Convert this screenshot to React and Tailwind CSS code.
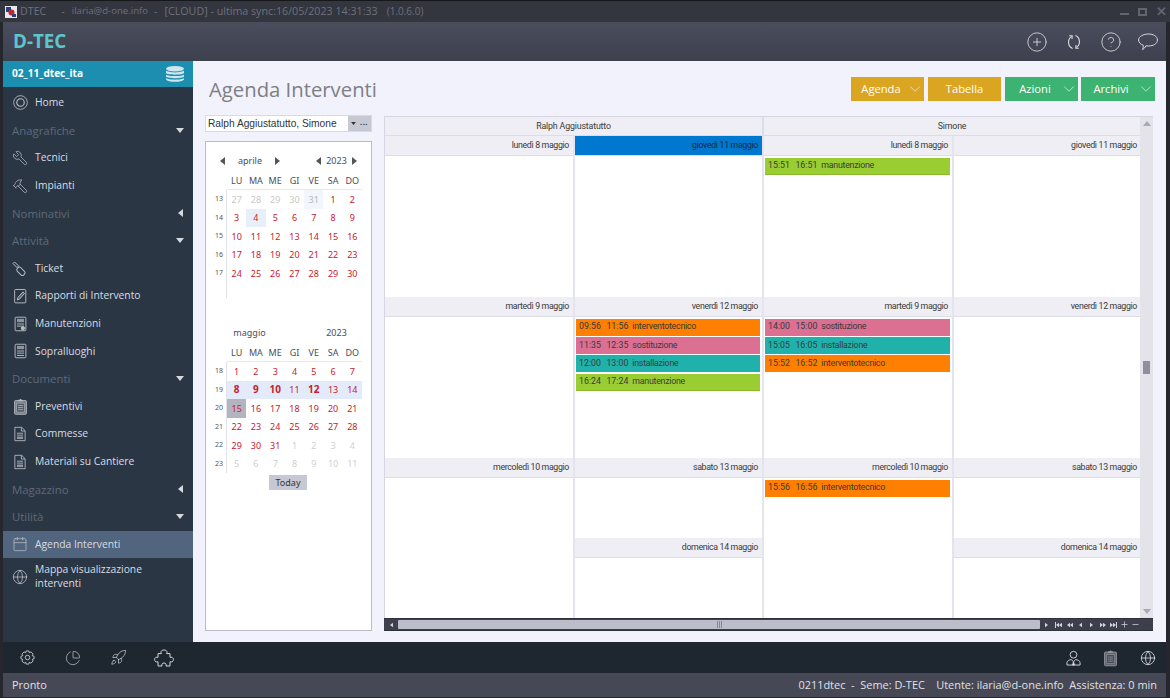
import { Wrench, Hammer, Globe, ChartPie, Rocket, CirclePlus, CircleHelp, Calendar, ChevronDown, Minus, Plus } from "lucide-react";

const ui = "font-['Open_Sans',sans-serif]";
const cal = "font-['Noto_Sans',sans-serif]";
const small = "font-['Roboto',sans-serif]";

const Arrow = ({ dir = "down", className = "" }) => {
  const pts = { down: "0,0 8,0 4,5", left: "5,0 5,8 0,4", right: "0,0 0,8 5,4", up: "0,5 8,5 4,0" };
  const box = dir === "down" || dir === "up" ? "0 0 8 5" : "0 0 5 8";
  const size = dir === "down" || dir === "up" ? { width: 8, height: 5 } : { width: 5, height: 8 };
  return (
    <svg viewBox={box} {...size} className={className}>
      <polygon points={pts[dir]} fill="currentColor" />
    </svg>
  );
};

const HomeIcon = () => (
  <svg viewBox="0 0 16 16" className="w-[15px] h-[15px]" fill="none" stroke="currentColor" strokeWidth="0.9">
    <circle cx="8" cy="8" r="7.3" />
    <circle cx="8" cy="8" r="4" strokeWidth="1.2" />
  </svg>
);

const TicketIcon = () => (
  <svg viewBox="0 0 16 16" className="w-4 h-4" fill="none" stroke="currentColor" strokeWidth="1">
    <path d="M1 2.6 L2.6 1 L6.6 5 L5 6.6 Z" />
    <rect x="6.6" y="5.8" width="5" height="9" rx="2" transform="rotate(-45 9 10.5)" />
  </svg>
);

const ReportIcon = () => (
  <svg viewBox="0 0 14 16" className="w-[13px] h-4" fill="none" stroke="currentColor" strokeWidth="1">
    <rect x="0.7" y="1" width="12" height="14.4" rx="1" />
    <path d="M3.5 12.3 L4.2 9.6 L9.6 3.6 L11.3 5.2 L5.9 11.4 Z" fill="currentColor" fillOpacity="0.35" />
  </svg>
);

const SheetIcon = ({ gear }) => (
  <svg viewBox="0 0 14 16" className="w-[13px] h-4" fill="none" stroke="currentColor" strokeWidth="1">
    <rect x="1.2" y="0.7" width="11.6" height="14.6" rx="1" />
    <rect x="3.2" y="2.5" width="7.6" height="3.5" fill="currentColor" stroke="none" opacity="0.7" />
    <path d="M3.2 8 H10.8 M3.2 10.3 H10.8" />
    {gear ? <circle cx="9.6" cy="12.6" r="1.8" fill="currentColor" /> : <path d="M3.2 12.8 H10.8" />}
  </svg>
);

const ClipIcon = ({ className = "w-[13px] h-[17px]" }) => (
  <svg viewBox="0 0 14 18" className={className}>
    <rect x="0.6" y="2.6" width="12.8" height="14.8" rx="1" fill="currentColor" fillOpacity="0.55" stroke="currentColor" strokeWidth="0.9" />
    <path d="M4.6 3.4 V1.8 H6 A1 1 0 0 1 8 1.8 H9.4 V3.4 Z" fill="currentColor" />
    <rect x="3" y="5.4" width="8" height="9.6" fill="#2b3644" fillOpacity="0.55" stroke="currentColor" strokeWidth="0.6" />
    <path d="M4.4 8 H9.6 M4.4 10.2 H9.6 M4.4 12.4 H9.6" stroke="currentColor" strokeWidth="0.8" />
  </svg>
);

const DocIcon = () => (
  <svg viewBox="0 0 14 17" className="w-[12px] h-[16px]" fill="none" stroke="currentColor" strokeWidth="1">
    <path d="M1 0.7 H9 L13 4.7 V16.3 H1 Z" />
    <path d="M8.6 0.9 V5 H12.8" />
    <path d="M3.4 7.6 H10.6 M3.4 9.8 H10.6" />
    <rect x="3.4" y="11.4" width="7.2" height="3" fill="currentColor" fillOpacity="0.7" stroke="none" />
  </svg>
);

const DbIcon = () => (
  <svg viewBox="0 0 20 16" className="w-5 h-4 text-[#cfe6ee]" fill="currentColor">
    <ellipse cx="10" cy="2.8" rx="9" ry="2.8" />
    <path d="M1 4.6 C3 7 17 7 19 4.6 V7 C17 9.2 3 9.2 1 7 Z" />
    <path d="M1 8.4 C3 10.6 17 10.6 19 8.4 V10.6 C17 12.8 3 12.8 1 10.6 Z" />
    <path d="M1 12 C3 14.2 17 14.2 19 12 V13.4 C17 16.6 3 16.6 1 13.4 Z" />
  </svg>
);

const SyncIcon = () => (
  <svg viewBox="0 0 14 18" className="w-[14px] h-[18px]" fill="none" stroke="currentColor" strokeWidth="1.1">
    <path d="M5.6 15.4 C0.8 13.4 0 6.6 4.6 3.4" />
    <path d="M2.2 2.8 L5.2 2.8 L5 6" />
    <path d="M8.4 2.6 C13.2 4.6 14 11.4 9.4 14.6" />
    <path d="M11.8 15.2 L8.8 15.2 L9 12" />
  </svg>
);

const ChatIcon = () => (
  <svg viewBox="0 0 20 18" className="w-5 h-[18px]" fill="none" stroke="currentColor" strokeWidth="1">
    <path d="M10.5 1 C15.5 1 19.4 3.4 19.4 7 C19.4 10.6 15.5 13 10.5 13 C9.6 13 8.7 12.9 7.9 12.8 C7.2 14.4 6 15.8 4.6 16.6 C5.2 15.2 5.4 13.6 5.2 12.2 C2.4 11.2 0.6 9.4 0.6 7 C0.6 3.4 5.5 1 10.5 1 Z" />
  </svg>
);

const GearIcon = () => (
  <svg viewBox="0 0 16 16" className="w-[15px] h-[15px]" fill="none" stroke="currentColor" strokeWidth="0.9">
    <path d="M6.6 1 H9.4 L9.9 2.9 L11.7 2 L14 4.3 L13 6 L15 6.7 V9.3 L13 10 L14 11.7 L11.7 14 L9.9 13.1 L9.4 15 H6.6 L6.1 13.1 L4.3 14 L2 11.7 L3 10 L1 9.3 V6.7 L3 6 L2 4.3 L4.3 2 L6.1 2.9 Z" />
    <circle cx="8" cy="8" r="2.4" />
  </svg>
);

const PuzzleIcon = () => (
  <svg viewBox="0 0 20 18" className="w-5 h-[18px]" fill="none" stroke="currentColor" strokeWidth="1">
    <path d="M7.4 4.6 C6.4 3.2 7 1 10 1 C13 1 13.6 3.2 12.6 4.6 H16 V8.4 C17.6 7.8 19.4 8.6 19.4 10.6 C19.4 12.6 17.6 13.4 16 12.8 V17 H12 C12.6 15.4 11.8 14 10 14 C8.2 14 7.4 15.4 8 17 H4 V12.8 C2.4 13.4 0.6 12.6 0.6 10.6 C0.6 8.6 2.4 7.8 4 8.4 V4.6 Z" />
  </svg>
);

const PersonIcon = () => (
  <svg viewBox="0 0 16 17" className="w-[15px] h-4" fill="none" stroke="currentColor" strokeWidth="1">
    <circle cx="8" cy="5" r="3.6" />
    <path d="M1 16 V13.6 C1 11.6 3.4 10.4 5.6 10.2 L8 12.4 L10.4 10.2 C12.6 10.4 15 11.6 15 13.6 V16 Z" />
    <path d="M8 12.4 L7 16 H9 Z" fill="currentColor" />
  </svg>
);

const Logo = () => (
  <svg viewBox="0 0 12 12" className="w-3 h-3 mr-[3px]">
    <rect width="12" height="12" fill="#e8e8ec" />
    <rect x="1" y="1" width="5" height="5" fill="#2a3f7e" />
    <circle cx="6.5" cy="6.5" r="3" fill="#c8242b" />
    <rect x="7" y="8" width="4" height="3" fill="#2a3f7e" />
  </svg>
);

const menu = [
  { label: "Home", icon: <HomeIcon /> },
  { group: "Anagrafiche", dir: "down" },
  { label: "Tecnici", icon: <Wrench size={16} strokeWidth={1.1} className="-scale-x-100" /> },
  { label: "Impianti", icon: <Hammer size={16} strokeWidth={1.1} className="-scale-x-100" /> },
  { group: "Nominativi", dir: "left" },
  { group: "Attività", dir: "down" },
  { label: "Ticket", icon: <TicketIcon /> },
  { label: "Rapporti di Intervento", icon: <ReportIcon /> },
  { label: "Manutenzioni", icon: <SheetIcon gear /> },
  { label: "Sopralluoghi", icon: <SheetIcon /> },
  { group: "Documenti", dir: "down" },
  { label: "Preventivi", icon: <ClipIcon /> },
  { label: "Commesse", icon: <DocIcon /> },
  { label: "Materiali su Cantiere", icon: <DocIcon /> },
  { group: "Magazzino", dir: "left" },
  { group: "Utilità", dir: "down" },
  { label: "Agenda Interventi", icon: <Calendar size={16} strokeWidth={1.1} />, active: true },
];

const Sidebar = () => (
  <aside className={`w-[190px] shrink-0 flex flex-col bg-[#2b3644] ${ui}`}>
    <div className="h-[26px] flex items-center justify-between pl-[9px] pr-2 bg-[#1c8fb0] text-white text-[10.1px] font-bold">
      02_11_dtec_ita
      <DbIcon />
    </div>
    <div className="h-[2.2px]" />
    {menu.map((m) =>
      m.group ? (
        <div key={m.group} className="h-[27.6px] flex items-center justify-between pl-[9px] pr-[9px] text-[11.4px] text-[#5d6a7b]">
          {m.group}
          <span className="w-2 flex justify-center text-[#d5d8dd]">
            <Arrow dir={m.dir} />
          </span>
        </div>
      ) : (
        <div
          key={m.label}
          className={`h-[27.6px] flex items-center text-[10.3px] text-[#d8dde3] ${m.active ? "bg-[#51657e]" : ""}`}
        >
          <span className="w-8 flex justify-center text-[#b9bec5] pl-[4px] pr-[2px]">{m.icon}</span>
          {m.label}
        </div>
      )
    )}
    <div className="flex items-center text-[10.3px] text-[#d8dde3] pt-[5px]">
      <span className="w-8 flex justify-center text-[#c3c8ce] pl-[4px] pr-[2px]">
        <Globe size={16} strokeWidth={1.1} />
      </span>
      <span className="leading-[13.5px]">
        Mappa visualizzazione
        <br />
        interventi
      </span>
    </div>
  </aside>
);

const DAY_HEADS = ["LU", "MA", "ME", "GI", "VE", "SA", "DO"];

const april = {
  weeks: [13, 14, 15, 16, 17],
  days: [
    ["27", "28", "29", "30", "31", "1", "2"],
    ["3", "4", "5", "6", "7", "8", "9"],
    ["10", "11", "12", "13", "14", "15", "16"],
    ["17", "18", "19", "20", "21", "22", "23"],
    ["24", "25", "26", "27", "28", "29", "30"],
  ],
};

const may = {
  weeks: [18, 19, 20, 21, 22, 23],
  days: [
    ["1", "2", "3", "4", "5", "6", "7"],
    ["8", "9", "10", "11", "12", "13", "14"],
    ["15", "16", "17", "18", "19", "20", "21"],
    ["22", "23", "24", "25", "26", "27", "28"],
    ["29", "30", "31", "1", "2", "3", "4"],
    ["5", "6", "7", "8", "9", "10", "11"],
  ],
};

const Month = ({ name, data, nav, style }) => (
  <div className={`h-[172px] ${cal} text-[9px]`}>
    <div className="h-[20px] flex items-center text-[#4a4d58] pl-[13px]">
      <div className="w-[60px] flex items-center justify-between">
        {nav ? <Arrow dir="left" className="text-[#555]" /> : <span />}
        <span className={nav ? "" : "mr-[1px]"}>{name}</span>
        {nav ? <Arrow dir="right" className="text-[#555]" /> : <span />}
      </div>
      <div className="w-[41px] ml-[36px] flex items-center justify-between">
        {nav ? <Arrow dir="left" className="text-[#555]" /> : <span />}
        <span>2023</span>
        {nav ? <Arrow dir="right" className="text-[#555]" /> : <span />}
      </div>
    </div>
    <div className="mt-[2px] ml-[20px] w-[135px] h-[17px] flex items-center border-b border-[#e6e6ee] text-[#4a4d58]">
      {DAY_HEADS.map((d) => (
        <span key={d} className="w-[19.3px] text-center">{d}</span>
      ))}
    </div>
    <div className="flex">
      <div className="w-[20px] border-r border-[#e2e2ea] min-h-[108px] text-[7px] text-[#555] text-right pr-[3px]">
        {data.weeks.map((w) => (
          <div key={w} className="h-[18.5px] flex items-center justify-end">{w}</div>
        ))}
      </div>
      <div className="w-[135px]">
        {data.days.map((row, r) => (
          <div key={r} className={`flex h-[18.5px] items-center ${style(r, 0).row || ""}`}>
            {row.map((d, c) => {
              const s = style(r, c);
              return (
                <span key={c} className={`w-[19.3px] h-[18.5px] flex items-center justify-center ${s.cell}`}>
                  {d}
                </span>
              );
            })}
          </div>
        ))}
      </div>
    </div>
  </div>
);

const aprilStyle = (r, c) => {
  if (r === 0 && c === 4) return { cell: "text-[#b5b5b5] bg-[#f3f5fc]" };
  if (r === 0 && c < 5) return { cell: "text-[#c8c8c8]" };
  if (r === 1 && c === 1) return { cell: "text-[#c8202e] bg-[#e8effa]" };
  return { cell: "text-[#c8202e]" };
};

const mayStyle = (r, c) => {
  if (r === 1) {
    const bold = c < 3 || c === 4;
    return { row: "bg-[#e3ebfa]", cell: `text-[#c8202e] ${bold ? "font-bold text-[10px]" : ""}` };
  }
  if (r === 2 && c === 0) return { cell: "text-[#c8202e] bg-[#b2b5c0]" };
  if (r === 5 || (r === 4 && c > 2)) return { cell: "text-[#d0d0d0]" };
  return { cell: "text-[#c8202e]" };
};

const CalendarPanel = () => (
  <div className="w-[167px] shrink-0 flex flex-col -mt-px">
    <div className="h-[17px] flex bg-white border border-[#d8d9e4] text-[10.2px] text-[#333] font-['Liberation_Sans',sans-serif]">
      <span className="flex-1 pl-[2px] leading-[15px]">Ralph Aggiustatutto, Simone</span>
      <span className="w-[23px] bg-[#c6c8d3] flex items-center justify-center gap-[4px] text-[#333]">
        <Arrow dir="down" className="w-[5px] h-[3px]" />
        <span className="text-[8px] font-bold leading-[8px] tracking-[0.5px] -mt-[2px]">...</span>
      </span>
    </div>
    <div className="h-[490px] mt-[9px] bg-white border border-[#b9bbcb] pt-[9px] pl-[1px]">
      <Month name="aprile" data={april} nav style={aprilStyle} />
      <Month name="maggio" data={may} style={mayStyle} />
      <div className="flex justify-center -mt-[20px] pr-[2px]">
        <span className={`w-[38px] h-[15px] bg-[#c6c8d3] text-[#333] text-center text-[9px] leading-[15px] ${cal}`}>Today</span>
      </div>
    </div>
  </div>
);

const Event = ({ from, to, text, color }) => (
  <div className={`h-[17px] mb-[1.35px] flex items-center pl-[3px] ${color} text-[#3a3a3a] text-[8.8px] ${small}`}>
    <span>{from}</span>
    <span className="ml-[5.5px]">{to}</span>
    <span className="ml-[4px] tracking-[-0.25px]">{text}</span>
  </div>
);

const ORANGE = "bg-[#ff7f00]";
const PINK = "bg-[#db7093]";
const TEAL = "bg-[#20b2aa]";
const GREEN = "bg-[#9acd32] border-b border-[#8abb2c]";

const Day = ({ label, height, active, events = [] }) => (
  <div className={`${height} flex flex-col`}>
    <div
      className={`h-[20px] shrink-0 flex items-center justify-end pr-[4px] pt-px text-[8.8px] tracking-[-0.35px] ${small} border-b border-[#dcdde8] ${
        active ? "bg-[#0078d0] text-[#1c2b3a]" : "bg-[#eeeef4] text-[#3a3a3a]"
      }`}
    >
      {label}
    </div>
    <div className="flex-1 bg-white pl-[1px] pr-[2px] pt-[1.5px]">
      {events.map((e) => (
        <Event key={e.from} {...e} />
      ))}
    </div>
  </div>
);

const columns = [
  {
    w: "w-[190px]",
    days: [
      { label: "lunedì 8 maggio", height: "h-[161px]" },
      { label: "martedì 9 maggio", height: "h-[161px]" },
      { label: "mercoledì 10 maggio", height: "h-[160px]" },
    ],
  },
  {
    w: "w-[189px]",
    days: [
      { label: "giovedì 11 maggio", height: "h-[161px]", active: true },
      {
        label: "venerdì 12 maggio",
        height: "h-[161px]",
        events: [
          { from: "09:56", to: "11:56", text: "interventotecnico", color: ORANGE },
          { from: "11:35", to: "12:35", text: "sostituzione", color: PINK },
          { from: "12:00", to: "13:00", text: "installazione", color: TEAL },
          { from: "16:24", to: "17:24", text: "manutenzione", color: GREEN },
        ],
      },
      { label: "sabato 13 maggio", height: "h-[80px]" },
      { label: "domenica 14 maggio", height: "h-[80px]" },
    ],
  },
  {
    w: "w-[190px]",
    days: [
      {
        label: "lunedì 8 maggio",
        height: "h-[161px]",
        events: [{ from: "15:51", to: "16:51", text: "manutenzione", color: GREEN }],
      },
      {
        label: "martedì 9 maggio",
        height: "h-[161px]",
        events: [
          { from: "14:00", to: "15:00", text: "sostituzione", color: PINK },
          { from: "15:05", to: "16:05", text: "installazione", color: TEAL },
          { from: "15:52", to: "16:52", text: "interventotecnico", color: ORANGE },
        ],
      },
      {
        label: "mercoledì 10 maggio",
        height: "h-[160px]",
        events: [{ from: "15:56", to: "16:56", text: "interventotecnico", color: ORANGE }],
      },
    ],
  },
  {
    w: "w-[187px]",
    days: [
      { label: "giovedì 11 maggio", height: "h-[161px]" },
      { label: "venerdì 12 maggio", height: "h-[161px]" },
      { label: "sabato 13 maggio", height: "h-[80px]" },
      { label: "domenica 14 maggio", height: "h-[80px]" },
    ],
  },
];

const Tri = ({ dir, bar }) => (
  <span className="w-[11px] flex items-center justify-center text-[#d2d4dc]">
    {bar === "l" && <span className="w-px h-[6px] bg-current" />}
    <svg viewBox="0 0 4 6" className={`w-[3px] h-[6px] ${dir === "left" ? "-scale-x-100" : ""}`}>
      <polygon points="0,0 4,3 0,6" fill="currentColor" />
    </svg>
    {(bar === "d" || bar === "l" || bar === "r") && (
      <svg viewBox="0 0 4 6" className={`w-[3px] h-[6px] ${dir === "left" ? "-scale-x-100" : ""}`}>
        <polygon points="0,0 4,3 0,6" fill="currentColor" />
      </svg>
    )}
    {bar === "r" && <span className="w-px h-[6px] bg-current" />}
  </span>
);

const Scheduler = () => (
  <div className="w-[769px] flex flex-col">
    <div className="flex border border-b-0 border-[#d5d6e2] border-r-0">
      <div className="w-[755px] shrink-0 min-w-0">
        <div className={`h-[19px] flex text-[8.8px] tracking-[-0.15px] text-[#3a3a3a] bg-[#eeeef4] border-b border-[#dcdde8] ${small}`}>
          <span className="w-[379px] text-center leading-[18px] border-r-2 border-[#dcdde8]">Ralph Aggiustatutto</span>
          <span className="flex-1 text-center leading-[18px]">Simone</span>
        </div>
        <div className="flex">
          {columns.map((col, i) => (
            <div key={i} className={`${col.w} shrink-0 ${i < 3 ? "border-r-2 border-[#e4e4ee]" : ""}`}>
              {col.days.map((d, j) => (
                <Day key={j} {...d} />
              ))}
            </div>
          ))}
        </div>
      </div>
      <div className="flex-1 bg-[#e3e3e9] flex flex-col items-center justify-between py-[4px] text-[#a8a9b2] relative">
        <Arrow dir="up" className="w-2" />
        <span className="absolute top-[244px] w-[7px] h-[13px] bg-[#8e909c]" />
        <Arrow dir="down" className="w-2" />
      </div>
    </div>
    <div className="h-[13px] bg-[#3d3f4c] border-y border-[#2f3039] flex items-center pl-[2px] text-[#d2d4dc]">
      <Tri dir="left" />
      <div className="ml-[1px] w-[642px] h-[9px] bg-[#bbbdcb] rounded-[1px] flex items-center justify-center">
        <span className="w-[5px] h-[7px] bg-[repeating-linear-gradient(90deg,#868896_0,#868896_1px,transparent_1px,transparent_2px)]" />
      </div>
      <span className="ml-[1px] flex items-center">
        <Tri dir="right" />
        <span className="w-[1px]" />
        <Tri dir="left" bar="l" />
        <Tri dir="left" bar="d" />
        <Tri dir="left" />
        <Tri dir="right" />
        <Tri dir="right" bar="d" />
        <Tri dir="right" bar="r" />
        <span className="w-[11px] flex justify-center"><Plus size={9} strokeWidth={2} /></span>
        <span className="w-[11px] flex justify-center"><Minus size={9} strokeWidth={2} /></span>
      </span>
    </div>
  </div>
);

const Btn = ({ label, color, arrow, w }) => (
  <div className={`${w} h-[24px] ${color} flex items-center text-white text-[11.2px] ${ui} relative`}>
    <span className={`${arrow ? "w-[60px]" : "w-full"} text-center pt-px`}>{label}</span>
    {arrow && <ChevronDown size={18} strokeWidth={0.9} className="absolute right-0 top-[3px] text-[#f3f3f3]" />}
  </div>
);

const App = () => (
  <div className="w-[1170px] h-[698px] overflow-hidden bg-[#26272e] flex flex-col">
    {/* Title bar */}
    <div className={`h-[22px] shrink-0 flex items-center pl-[5px] pr-[3px] bg-[#33353f] border-t border-[#16171b] text-[#6f717b] text-[10.7px] ${ui}`}>
      <Logo />
      <span>DTEC</span>
      <span className="ml-[15px]">-</span>
      <span className="ml-[7px] text-[9.6px]">ilaria@d-one.info</span>
      <span className="ml-[6px]">-</span>
      <span className="ml-[7px]">[CLOUD] - ultima sync:16/05/2023 14:31:33</span>
      <span className="ml-[9px] text-[10px]">(1.0.6.0)</span>
      <span className="ml-auto flex items-center gap-[9px]">
        <span className="w-[9px] h-[2px] mt-[4px] bg-[#62646e]" />
        <span className="w-[9px] h-[8px] border-2 border-[#62646e]" />
        <span className="text-[#62646e] text-[13px] font-bold leading-[13px]">✕</span>
      </span>
    </div>

    <div className="flex-1 flex flex-col pl-[3px] pr-[4px] pb-px min-h-0">
      {/* Header */}
      <div className="h-[39px] shrink-0 flex items-center justify-between pl-[10px] bg-gradient-to-b from-[#4a4d5c] to-[#3d404d] text-[#d9dade]">
        <span className={`text-[#5ec5cc] text-[18.8px] font-bold ${ui}`}>D-TEC</span>
        <div className="flex items-center">
          <span className="w-[37px] flex justify-center"><CirclePlus size={22} strokeWidth={0.95} /></span>
          <span className="w-[37px] flex justify-center"><SyncIcon /></span>
          <span className="w-[37px] flex justify-center"><CircleHelp size={22} strokeWidth={0.95} /></span>
          <span className="w-[37px] flex justify-center"><ChatIcon /></span>
        </div>
      </div>

      {/* Main */}
      <div className="flex-1 flex min-h-0">
        <Sidebar />
        <main className="flex-1 bg-[#f1f2fc] pl-[12px] pr-[13px] flex flex-col min-w-0">
          <div className="h-[55px] shrink-0 flex items-start justify-between pt-[16px]">
            <h1 className={`pl-[4px] -mt-px text-[#7d7f86] text-[20.3px] leading-[26px] ${ui}`}>Agenda Interventi</h1>
            <div className="flex items-center -mr-[2px]">
              <Btn label="Agenda" color="bg-[#daa520]" w="w-[73px]" arrow />
              <span className="w-1" />
              <Btn label="Tabella" color="bg-[#daa520]" w="w-[73px]" />
              <span className="w-1" />
              <Btn label="Azioni" color="bg-[#3cb371]" w="w-[73px]" arrow />
              <span className="w-[3px]" />
              <Btn label="Archivi" color="bg-[#3cb371]" w="w-[74px]" arrow />
            </div>
          </div>
          <div className="flex gap-[12px]">
            <CalendarPanel />
            <Scheduler />
          </div>
        </main>
      </div>

      {/* Bottom toolbar */}
      <div className="h-[31px] shrink-0 bg-[#1e2630] flex items-center justify-between pl-px text-[#d5d7db]">
        <div className="flex items-center">
          <span className="w-[46px] flex justify-center"><GearIcon /></span>
          <span className="w-[45.5px] flex justify-center"><ChartPie size={16} strokeWidth={1} /></span>
          <span className="w-[45.5px] flex justify-center"><Rocket size={17} strokeWidth={1} /></span>
          <span className="w-[45.5px] flex justify-center"><PuzzleIcon /></span>
        </div>
        <div className="flex items-center">
          <span className="w-[37px] flex justify-center"><PersonIcon /></span>
          <span className="w-[37px] flex justify-center text-[#9a9da3]"><ClipIcon className="w-[13px] h-[18px]" /></span>
          <span className="w-[37px] flex justify-center"><Globe size={16} strokeWidth={1.3} /></span>
        </div>
      </div>

      {/* Status bar */}
      <div className={`h-[24px] shrink-0 bg-[#464856] flex items-center justify-between pl-[9px] pr-[9px] text-[10.95px] text-[#e0e1e5] ${ui}`}>
        <span>Pronto</span>
        <span className="whitespace-pre">{"0211dtec  -  Seme: D-TEC    Utente: ilaria@d-one.info  Assistenza: 0 min"}</span>
      </div>
    </div>
  </div>
);

export default App;
